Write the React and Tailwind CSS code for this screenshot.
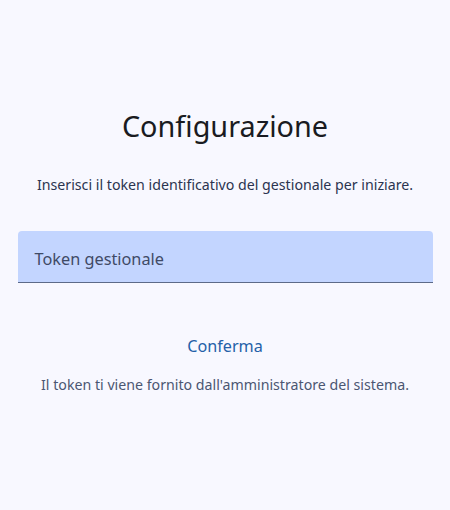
export default function App() {
  return (
    <div
      className="w-[450px] h-[510px] bg-[#f8f8ff] flex flex-col items-center font-[390]"
      style={{ fontFamily: '"Noto Sans", "Open Sans", sans-serif' }}
    >
      <h1 className="mt-[106px] text-[28.8px] leading-[40px] text-[#1a1b21]">Configurazione</h1>
      <p className="mt-[29px] text-[14.2px] leading-[20px] text-[#2b3450]">
        Inserisci il token identificativo del gestionale per iniziare.
      </p>
      <div className="mt-[36px] w-[415px] h-[52px] bg-[#c3d5ff] rounded-t-[4px] border-b border-[#5d6a88] flex items-center px-[17px] pt-[5px]">
        <span className="text-[16.3px] text-[#3f4a66]">Token gestionale</span>
      </div>
      <button className="mt-[51px] text-[16.2px] leading-[24px] text-[#2460a8] px-3">Conferma</button>
      <p className="mt-[17px] text-[14.2px] leading-[20px] text-[#4b5672]">
        Il token ti viene fornito dall'amministratore del sistema.
      </p>
    </div>
  );
}
